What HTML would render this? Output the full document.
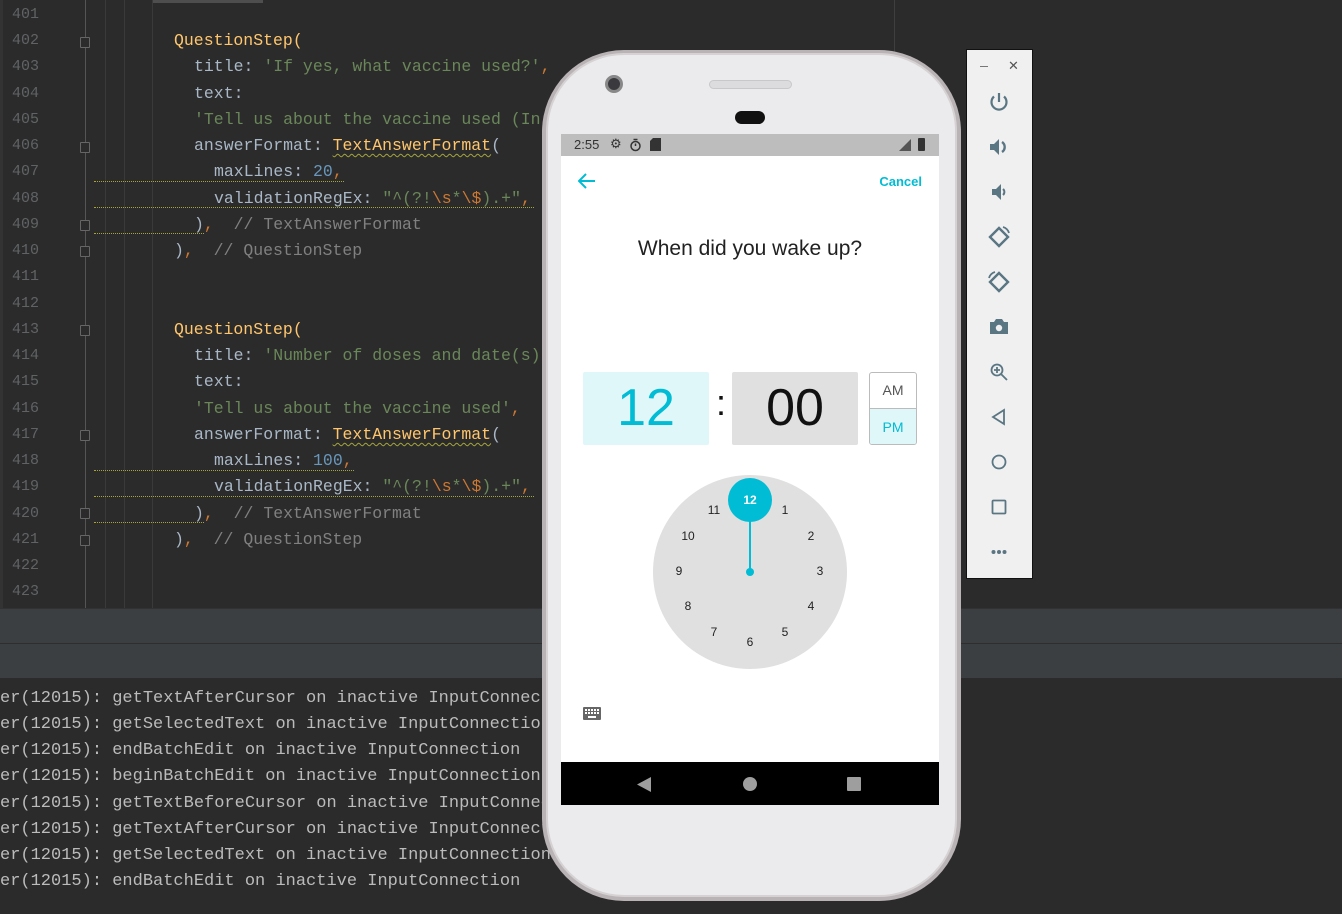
<!DOCTYPE html>
<html><head><meta charset="utf-8"><style>
*{margin:0;padding:0;box-sizing:border-box}
body{width:1342px;height:914px;background:#2b2b2b;position:relative;overflow:hidden;font-family:"Liberation Mono",monospace}
.ln{position:absolute;left:12px;color:#606366;font-size:15px;font-family:"Liberation Mono",monospace}
.c{position:absolute;font-size:16.5px;color:#a9b7c6;white-space:pre;line-height:20px}
.y{color:#ffc66d}.s{color:#6a8759}.o{color:#cc7832}.n{color:#6897bb}.g{color:#808080}
.u{text-decoration:underline wavy #a5a53a;text-decoration-thickness:1px;text-underline-offset:3px}
.log{position:absolute;left:0;font-size:17px;color:#bbbbbb;white-space:pre}
.vl{position:absolute;top:0;width:1px;height:608px;background:#3a3a3a}
.fold{position:absolute;left:80px;width:10px;height:11px;border:1px solid #666;border-radius:1px;background:#2b2b2b}
.num{position:absolute;font-family:"Liberation Sans",sans-serif;font-size:12px;color:#222;transform:translate(-50%,-50%)}
.ic{position:absolute;left:986px;width:26px;height:26px}
</style></head><body>
<div style="position:absolute;left:0;top:0;width:3px;height:608px;background:#333"></div>
<div style="position:absolute;left:153px;top:0;width:110px;height:3px;background:#4e4e4e"></div>
<div class="vl" style="left:85px;background:#555"></div>
<div class="vl" style="left:105px"></div>
<div class="vl" style="left:124px"></div>
<div class="vl" style="left:152px"></div>
<div class="vl" style="left:894px;background:#3f3f3f"></div>

<div class="ln" style="top:6px">401</div><div class="ln" style="top:32px">402</div><div class="ln" style="top:58px">403</div><div class="ln" style="top:85px">404</div><div class="ln" style="top:111px">405</div><div class="ln" style="top:137px">406</div><div class="ln" style="top:163px">407</div><div class="ln" style="top:190px">408</div><div class="ln" style="top:216px">409</div><div class="ln" style="top:242px">410</div><div class="ln" style="top:268px">411</div><div class="ln" style="top:295px">412</div><div class="ln" style="top:321px">413</div><div class="ln" style="top:347px">414</div><div class="ln" style="top:373px">415</div><div class="ln" style="top:400px">416</div><div class="ln" style="top:426px">417</div><div class="ln" style="top:452px">418</div><div class="ln" style="top:478px">419</div><div class="ln" style="top:505px">420</div><div class="ln" style="top:531px">421</div><div class="ln" style="top:557px">422</div><div class="ln" style="top:583px">423</div>

<div class="fold" style="top:37px"></div><div class="fold" style="top:142px"></div><div class="fold" style="top:220px"></div><div class="fold" style="top:246px"></div>
<div class="fold" style="top:325px"></div><div class="fold" style="top:430px"></div><div class="fold" style="top:508px"></div><div class="fold" style="top:535px"></div>

<div class="c y" style="left:174px;top:31px">QuestionStep(</div>
<div class="c" style="left:194px;top:57px">title: <span class="s">'If yes, what vaccine used?'</span><span class="o">,</span></div>
<div class="c" style="left:194px;top:84px">text:</div>
<div class="c s" style="left:194px;top:110px">'Tell us about the vaccine used (In</div>
<div class="c" style="left:194px;top:136px">answerFormat: <span class="y u">TextAnswerFormat</span>(</div>
<div class="c" style="left:214px;top:162px">maxLines: <span class="n">20</span><span class="o">,</span></div>
<div class="c" style="left:214px;top:189px">validationRegEx: <span class="s">"^(?!<span class="o">\s</span>*<span class="o">\$</span>).+"</span><span class="o">,</span></div>
<div class="c" style="left:194px;top:215px">)<span class="o">,</span>  <span class="g">// TextAnswerFormat</span></div>
<div class="c" style="left:174px;top:241px">)<span class="o">,</span>  <span class="g">// QuestionStep</span></div>
<div style="position:absolute;left:94px;top:181px;width:250px;border-top:1px dotted #a5a53a"></div>
<div style="position:absolute;left:94px;top:207px;width:440px;border-top:1px dotted #a5a53a"></div>
<div style="position:absolute;left:94px;top:233px;width:110px;border-top:1px dotted #a5a53a"></div>

<div class="c y" style="left:174px;top:320px">QuestionStep(</div>
<div class="c" style="left:194px;top:346px">title: <span class="s">'Number of doses and date(s)'</span></div>
<div class="c" style="left:194px;top:372px">text:</div>
<div class="c" style="left:194px;top:399px"><span class="s">'Tell us about the vaccine used'</span><span class="o">,</span></div>
<div class="c" style="left:194px;top:425px">answerFormat: <span class="y u">TextAnswerFormat</span>(</div>
<div class="c" style="left:214px;top:451px">maxLines: <span class="n">100</span><span class="o">,</span></div>
<div class="c" style="left:214px;top:477px">validationRegEx: <span class="s">"^(?!<span class="o">\s</span>*<span class="o">\$</span>).+"</span><span class="o">,</span></div>
<div class="c" style="left:194px;top:504px">)<span class="o">,</span>  <span class="g">// TextAnswerFormat</span></div>
<div class="c" style="left:174px;top:530px">)<span class="o">,</span>  <span class="g">// QuestionStep</span></div>
<div style="position:absolute;left:94px;top:470px;width:260px;border-top:1px dotted #a5a53a"></div>
<div style="position:absolute;left:94px;top:496px;width:440px;border-top:1px dotted #a5a53a"></div>
<div style="position:absolute;left:94px;top:522px;width:110px;border-top:1px dotted #a5a53a"></div>

<div style="position:absolute;left:0;top:608px;width:1342px;height:35px;background:#3c3f41;border-top:1px solid #323232"></div>
<div style="position:absolute;left:0;top:643px;width:1342px;height:35px;background:#3c3f41;border-top:1px solid #2e2e2e"></div>

<div class="log" style="top:689px">er(12015): getTextAfterCursor on inactive InputConnection</div>
<div class="log" style="top:715px">er(12015): getSelectedText on inactive InputConnection</div>
<div class="log" style="top:741px">er(12015): endBatchEdit on inactive InputConnection</div>
<div class="log" style="top:767px">er(12015): beginBatchEdit on inactive InputConnection</div>
<div class="log" style="top:794px">er(12015): getTextBeforeCursor on inactive InputConnection</div>
<div class="log" style="top:820px">er(12015): getTextAfterCursor on inactive InputConnection</div>
<div class="log" style="top:846px">er(12015): getSelectedText on inactive InputConnection</div>
<div class="log" style="top:872px">er(12015): endBatchEdit on inactive InputConnection</div>

<!-- phone -->
<div style="position:absolute;left:542px;top:50px;width:419px;height:851px;border-radius:82px;background:#b9b3b5"></div>
<div style="position:absolute;left:546px;top:53px;width:411px;height:844px;border-radius:78px;background:#ebebed;border:2px solid #d6d2d3"></div>
<div style="position:absolute;left:605px;top:75px;width:18px;height:18px;border-radius:50%;background:#3a3a3e;border:3px solid #888"></div>
<div style="position:absolute;left:709px;top:80px;width:83px;height:9px;border-radius:5px;background:#dcdcde;border:1px solid #c8c8ca"></div>
<div style="position:absolute;left:735px;top:111px;width:30px;height:13px;border-radius:7px;background:#111"></div>

<div style="position:absolute;left:561px;top:134px;width:378px;height:671px;background:#fff;font-family:'Liberation Sans',sans-serif">
 <div style="height:22px;background:#bdbdbd;position:relative;font-size:13px;color:#333">
  <span style="position:absolute;left:13px;top:3px">2:55</span>
  <span style="position:absolute;left:49px;top:2px;font-size:13px">⚙</span>
  <svg style="position:absolute;left:68px;top:4px" width="13" height="14" viewBox="0 0 13 14"><circle cx="6.5" cy="8" r="4.5" fill="none" stroke="#333" stroke-width="1.5"/><path d="M4.5 1.5h4M6.5 8V5.5" stroke="#333" stroke-width="1.5"/></svg>
  <svg style="position:absolute;left:89px;top:4px" width="11" height="13"><path d="M3 0h8v13H0V3z" fill="#333"/></svg>
  <svg style="position:absolute;left:338px;top:5px" width="12" height="12"><path d="M12 0v12H0z" fill="#555"/></svg>
  <div style="position:absolute;left:357px;top:4px;width:7px;height:13px;background:#333;border-radius:1px"></div>
 </div>
 <svg style="position:absolute;left:17px;top:39px" width="18" height="16" viewBox="0 0 18 16"><path d="M17 8H2M8 1L1 8l7 7" fill="none" stroke="#00bcd4" stroke-width="2"/></svg>
 <div style="position:absolute;right:17px;top:40px;color:#00bcd4;font-size:13px;font-weight:bold">Cancel</div>
 <div style="position:absolute;left:0;width:378px;top:103px;text-align:center;font-size:21px;color:#212121">When did you wake up?</div>
 <div style="position:absolute;left:22px;top:238px;width:126px;height:73px;background:#e0f7fa;border-radius:2px;color:#00bcd4;font-size:52px;text-align:center;line-height:73px">12</div>
 <div style="position:absolute;left:150px;top:248px;width:20px;text-align:center;font-size:36px;color:#111">:</div>
 <div style="position:absolute;left:171px;top:238px;width:126px;height:73px;background:#e0e0e0;border-radius:2px;color:#111;font-size:52px;text-align:center;line-height:73px">00</div>
 <div style="position:absolute;left:308px;top:238px;width:48px;height:73px;border:1px solid #bbb;border-radius:3px;overflow:hidden;font-size:14px;text-align:center">
  <div style="height:36px;line-height:35px;color:#555;border-bottom:1px solid #bbb">AM</div>
  <div style="height:36px;line-height:36px;color:#00bcd4;background:#e0f7fa">PM</div>
 </div>
 <div style="position:absolute;left:92px;top:341px;width:194px;height:194px;border-radius:50%;background:#e0e0e0"></div>
 <div style="position:absolute;left:167px;top:344px;width:44px;height:44px;border-radius:50%;background:#00bcd4;color:#fff;font-size:12px;font-weight:bold;text-align:center;line-height:44px">12</div>
 <div style="position:absolute;left:188px;top:386px;width:2px;height:52px;background:#00bcd4"></div>
 <div style="position:absolute;left:185px;top:434px;width:8px;height:8px;border-radius:50%;background:#00bcd4"></div>
 <div class="num" style="left:224px;top:376px">1</div><div class="num" style="left:250px;top:402px">2</div><div class="num" style="left:259px;top:437px">3</div><div class="num" style="left:250px;top:472px">4</div><div class="num" style="left:224px;top:498px">5</div><div class="num" style="left:189px;top:508px">6</div><div class="num" style="left:153px;top:498px">7</div><div class="num" style="left:127px;top:472px">8</div><div class="num" style="left:118px;top:437px">9</div><div class="num" style="left:127px;top:402px">10</div><div class="num" style="left:153px;top:376px">11</div>
 <svg style="position:absolute;left:22px;top:573px" width="18" height="13"><rect width="18" height="13" rx="1" fill="#666"/><g fill="#fff"><rect x="2" y="2" width="2" height="2"/><rect x="5" y="2" width="2" height="2"/><rect x="8" y="2" width="2" height="2"/><rect x="11" y="2" width="2" height="2"/><rect x="14" y="2" width="2" height="2"/><rect x="2" y="5" width="2" height="2"/><rect x="5" y="5" width="2" height="2"/><rect x="8" y="5" width="2" height="2"/><rect x="11" y="5" width="2" height="2"/><rect x="14" y="5" width="2" height="2"/><rect x="5" y="9" width="8" height="2"/></g></svg>
 <div style="position:absolute;left:0;top:628px;width:378px;height:43px;background:#000">
  <svg style="position:absolute;left:76px;top:15px" width="14" height="15"><path d="M14 0v15L0 7.5z" fill="#9e9e9e"/></svg>
  <div style="position:absolute;left:182px;top:15px;width:14px;height:14px;border-radius:50%;background:#9e9e9e"></div>
  <div style="position:absolute;left:286px;top:15px;width:14px;height:14px;background:#9e9e9e;border-radius:1px"></div>
 </div>
</div>

<!-- emulator side panel -->
<div style="position:absolute;left:966px;top:49px;width:67px;height:530px;background:#f0f0f0;border:1px solid #111"></div>
<div style="position:absolute;left:980px;top:66px;width:8px;height:1px;background:#777"></div>
<div style="position:absolute;left:1008px;top:58px;font-family:'Liberation Sans',sans-serif;font-size:13px;color:#555">✕</div>
<svg class="ic" style="top:89px" viewBox="0 0 26 26" fill="none" stroke="#5a7683" stroke-width="2.2"><path d="M13 4v9"/><path d="M8 7.5a7.5 7.5 0 1 0 10 0"/></svg>
<svg class="ic" style="top:134px" viewBox="0 0 26 26"><path d="M4 10h4l5-5v16l-5-5H4z" fill="#5a7683"/><path d="M16 8a6 6 0 0 1 0 10" fill="none" stroke="#5a7683" stroke-width="2.4"/></svg>
<svg class="ic" style="top:179px" viewBox="0 0 26 26"><path d="M6 10h4l5-5v16l-5-5H6z" fill="#5a7683"/><path d="M17 10a4 4 0 0 1 0 6" fill="none" stroke="#5a7683" stroke-width="2"/></svg>
<svg class="ic" style="top:224px" viewBox="0 0 26 26" fill="none" stroke="#5a7683" stroke-width="2.4"><path d="M13 4l9 9-9 9-9-9z"/><path d="M17 3a9 9 0 0 1 6 6" stroke-width="1.8"/></svg>
<svg class="ic" style="top:269px" viewBox="0 0 26 26" fill="none" stroke="#5a7683" stroke-width="2.4"><path d="M13 4l9 9-9 9-9-9z"/><path d="M9 3a9 9 0 0 0-6 6" stroke-width="1.8"/></svg>
<svg class="ic" style="top:314px" viewBox="0 0 26 26"><path d="M4 8h4l2-3h6l2 3h4v12H4z" fill="#5a7683"/><circle cx="13" cy="14" r="3.2" fill="#f0f0f0"/></svg>
<svg class="ic" style="top:359px" viewBox="0 0 26 26" fill="none" stroke="#5a7683" stroke-width="1.8"><circle cx="11" cy="11" r="5.5"/><path d="M15 15l6 6M11 8v6M8 11h6"/></svg>
<svg class="ic" style="top:404px" viewBox="0 0 26 26" fill="none" stroke="#5a7683" stroke-width="1.8"><path d="M18 6v14L7 13z"/></svg>
<svg class="ic" style="top:449px" viewBox="0 0 26 26" fill="none" stroke="#5a7683" stroke-width="1.8"><circle cx="13" cy="13" r="6.5"/></svg>
<svg class="ic" style="top:494px" viewBox="0 0 26 26" fill="none" stroke="#5a7683" stroke-width="1.8"><rect x="6.5" y="6.5" width="13" height="13" rx="1"/></svg>
<svg class="ic" style="top:539px" viewBox="0 0 26 26" fill="#5a7683"><circle cx="7.5" cy="13" r="2"/><circle cx="13" cy="13" r="2"/><circle cx="18.5" cy="13" r="2"/></svg>
</body></html>
